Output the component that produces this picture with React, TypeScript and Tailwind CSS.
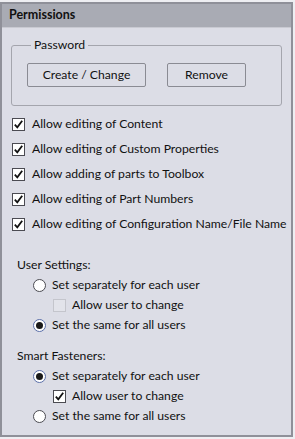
import React from 'react'

const font = { fontFamily: 'Lato, "Noto Sans", sans-serif' }

function Check({ checked, disabled }: { checked?: boolean; disabled?: boolean }) {
  return (
    <span className={`flex h-[13px] w-[13px] shrink-0 items-center justify-center border ${disabled ? 'border-[#c4c5cc] bg-[#e2e3ea]' : 'border-[#4b4b52] bg-white'}`}>
      {checked && (
        <svg width="11" height="11" viewBox="0 0 11 11">
          <path d="M1.8 5.6 L4.3 8.3 L9.2 1.8" fill="none" stroke="#111" strokeWidth="1.8" />
        </svg>
      )}
    </span>
  )
}

function Radio({ checked }: { checked?: boolean }) {
  return (
    <span className={`flex h-[13px] w-[13px] shrink-0 items-center justify-center rounded-full border ${checked ? 'border-[#5a6ea8]' : 'border-[#4b4b52]'} bg-white`}>
      {checked && <span className="h-[7px] w-[7px] rounded-full bg-[#1a1a1a]" />}
    </span>
  )
}

function CheckRow({ label }: { label: string }) {
  return (
    <div className="flex h-[25px] items-center gap-[7px] whitespace-nowrap">
      <Check checked />
      <span>{label}</span>
    </div>
  )
}

function RadioGroup({ title, first, sub, subDisabled }: { title: string; first: boolean; sub: boolean; subDisabled: boolean }) {
  return (
    <div className="flex flex-col">
      <div className="flex h-[20px] items-center">{title}</div>
      <div className="flex h-[20px] items-center gap-[6px] pl-[16px]">
        <Radio checked={first} />
        <span>Set separately for each user</span>
      </div>
      <div className="flex h-[20px] items-center gap-[6px] pl-[36px]">
        <Check checked={sub} disabled={subDisabled} />
        <span>Allow user to change</span>
      </div>
      <div className="flex h-[20px] items-center gap-[6px] pl-[16px]">
        <Radio checked={!first} />
        <span>Set the same for all users</span>
      </div>
    </div>
  )
}

export default function App() {
  return (
    <div className="h-[439px] w-[295px] bg-[#eeeef2] pt-[2px]" style={font}>
      <div className="flex h-[435px] w-[293px] flex-col border-2 border-[#8f9099] bg-[#dcdde6] text-[12.2px] text-[#111]">
        <div className="flex h-[24px] items-center border-b border-[#c9cad2] bg-[#a9abb4] pl-[7px] text-[12.5px] font-bold">
          Permissions
        </div>
        <div className="px-[9px] pt-[9px]">
          <fieldset className="h-[69px] rounded-[3px] border border-[#a4a5ad] px-[15px] pt-[10px]">
            <legend className="ml-[4px] px-[3px] leading-[16px]">Password</legend>
            <div className="flex gap-[21px]">
              <button className="h-[24px] w-[119px] rounded-[2px] border border-[#8a8b93] bg-[#dcdde6]">Create / Change</button>
              <button className="h-[24px] w-[79px] rounded-[2px] border border-[#8a8b93] bg-[#dcdde6]">Remove</button>
            </div>
          </fieldset>
        </div>
        <div className="flex flex-col pl-[10px] pt-[6px]">
          <CheckRow label="Allow editing of Content" />
          <CheckRow label="Allow editing of Custom Properties" />
          <CheckRow label="Allow adding of parts to Toolbox" />
          <CheckRow label="Allow editing of Part Numbers" />
          <CheckRow label="Allow editing of Configuration Name/File Name" />
        </div>
        <div className="flex flex-col gap-[11px] pl-[15px] pt-[18px]">
          <RadioGroup title="User Settings:" first={false} sub={false} subDisabled />
          <RadioGroup title="Smart Fasteners:" first sub subDisabled={false} />
        </div>
      </div>
    </div>
  )
}
